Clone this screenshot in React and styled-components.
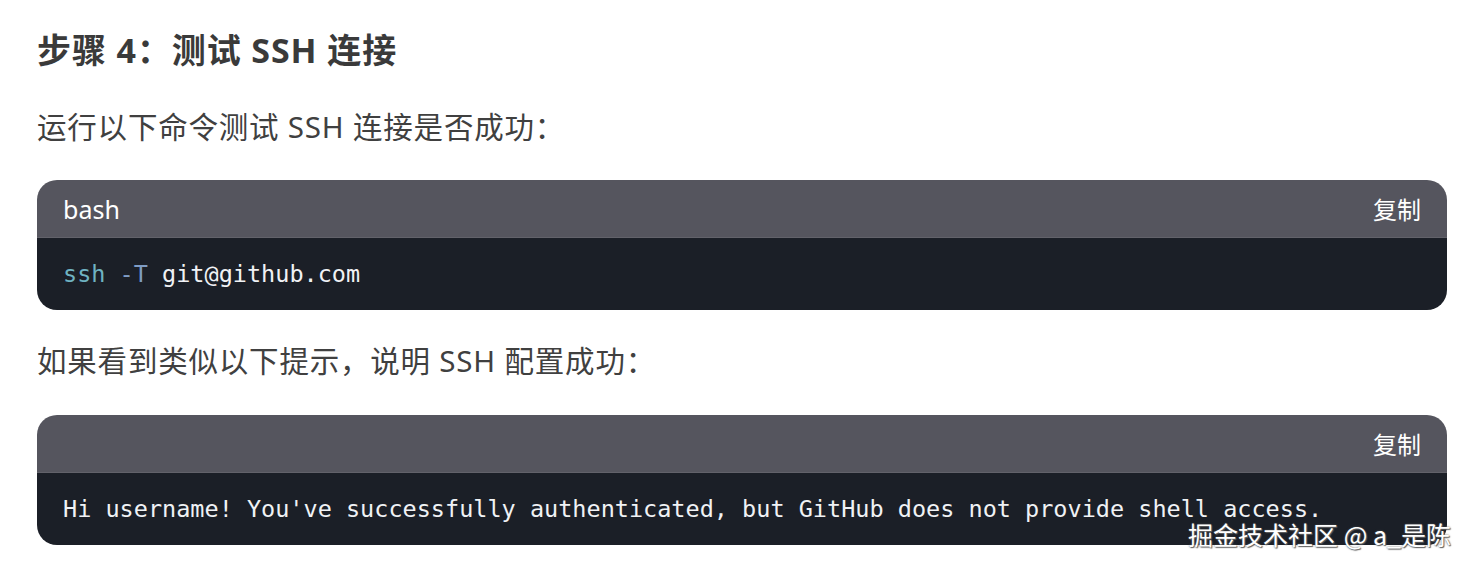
import React from "react";
import styled, { createGlobalStyle } from "styled-components";

const GlobalStyle = createGlobalStyle`
  html, body {
    margin: 0;
    padding: 0;
    background: #fff;
  }
  body {
    font-family: "Noto Sans", "Noto Sans CJK SC", sans-serif;
  }
`;

const Page = styled.div`
  position: relative;
  width: 1469px;
  height: 568px;
  padding: 28px 22px 0 37px;
  box-sizing: border-box;
  display: flex;
  flex-direction: column;
  overflow: hidden;
`;

const Heading = styled.h2`
  margin: 0 0 35px;
  font-size: 34px;
  line-height: 44px;
  font-weight: 700;
  letter-spacing: 0.9px;
  color: #3a3a3a;
  font-family: "Noto Sans", "Noto Sans CJK SC", sans-serif;
`;

const Para = styled.p`
  margin: 0 0 ${(p) => p.gap || 33}px;
  font-size: 29.5px;
  line-height: 40px;
  letter-spacing: 0.8px;
  color: #404040;
  font-family: "Noto Sans", "Noto Sans CJK SC", sans-serif;
`;

const CodeBlock = styled.div`
  border-radius: 20px;
  overflow: hidden;
  margin-bottom: ${(p) => p.gap || 0}px;
`;

const CodeHeader = styled.div`
  height: 58px;
  background: #55555e;
  display: flex;
  align-items: center;
  justify-content: space-between;
  padding: 0 26px;
  color: #fff;
  border-bottom: 1px solid #62626a;
  box-sizing: border-box;
`;

const Lang = styled.span`
  font-size: 25px;
  font-family: "Noto Sans", "Noto Sans CJK SC", sans-serif;
`;

const CopyBtn = styled.span`
  margin-left: auto;
  font-size: 24px;
  font-family: "Noto Sans CJK SC", sans-serif;
`;

const CodeBody = styled.pre`
  margin: 0;
  height: 72px;
  background: #1b1f27;
  display: flex;
  align-items: center;
  padding: 0 26px;
  font-family: "DejaVu Sans Mono", "Liberation Mono", monospace;
  font-size: 23.5px;
  color: #f0f2f5;
`;

const Code = styled.code`
  font: inherit;
  white-space: pre;
`;

const Tok = styled.span`
  color: ${(p) => p.color};
`;

const Watermark = styled.div`
  position: absolute;
  right: 18px;
  top: 517px;
  font-size: 25px;
  line-height: 34px;
  color: #ffffff;
  font-family: "Noto Sans CJK SC", sans-serif;
  text-shadow: 0 0 2px #555, 1px 1px 1px #666;
`;

export default function App() {
  return (
    <>
      <GlobalStyle />
      <Page>
        <Heading>步骤 4：测试 SSH 连接</Heading>
        <Para>运行以下命令测试 SSH 连接是否成功：</Para>
        <CodeBlock gap={31}>
          <CodeHeader>
            <Lang>bash</Lang>
            <CopyBtn>复制</CopyBtn>
          </CodeHeader>
          <CodeBody>
            <Code>
              <Tok color="#6fb3c2">ssh</Tok> <Tok color="#7f9cc4">-T</Tok> git@github.com
            </Code>
          </CodeBody>
        </CodeBlock>
        <Para gap={34}>如果看到类似以下提示，说明 SSH 配置成功：</Para>
        <CodeBlock>
          <CodeHeader>
            <CopyBtn>复制</CopyBtn>
          </CodeHeader>
          <CodeBody>
            <Code>
              Hi username! You've successfully authenticated, but GitHub does not provide shell access.
            </Code>
          </CodeBody>
        </CodeBlock>
        <Watermark>掘金技术社区 @ a_是陈</Watermark>
      </Page>
    </>
  );
}
